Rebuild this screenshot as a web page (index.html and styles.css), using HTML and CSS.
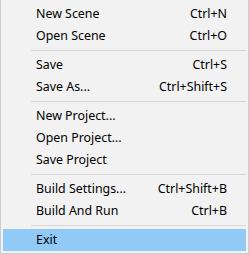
FILE: index.html
```html
<!DOCTYPE html>
<html lang="en">
<head>
  <meta charset="utf-8">
  <title>File menu</title>
  <link rel="stylesheet" href="styles.css">
</head>
<body>
  <ul class="menu">
    <li class="menu__item"><span class="menu__label">New Scene</span><span class="menu__key">Ctrl+N</span></li>
    <li class="menu__item"><span class="menu__label">Open Scene</span><span class="menu__key">Ctrl+O</span></li>
    <li class="menu__sep"></li>
    <li class="menu__item"><span class="menu__label">Save</span><span class="menu__key">Ctrl+S</span></li>
    <li class="menu__item"><span class="menu__label">Save As...</span><span class="menu__key">Ctrl+Shift+S</span></li>
    <li class="menu__sep"></li>
    <li class="menu__item"><span class="menu__label">New Project...</span></li>
    <li class="menu__item"><span class="menu__label">Open Project...</span></li>
    <li class="menu__item"><span class="menu__label">Save Project</span></li>
    <li class="menu__sep"></li>
    <li class="menu__item"><span class="menu__label">Build Settings...</span><span class="menu__key">Ctrl+Shift+B</span></li>
    <li class="menu__item"><span class="menu__label">Build And Run</span><span class="menu__key">Ctrl+B</span></li>
    <li class="menu__sep"></li>
    <li class="menu__item menu__item--active"><span class="menu__label">Exit</span></li>
  </ul>
</body>
</html>
```

FILE: styles.css
```css
*, *::before, *::after {
  margin: 0;
  padding: 0;
  box-sizing: border-box;
}

html {
  background: #ffffff;
}

body {
  margin: 0;
  font-family: "Noto Sans", sans-serif;
  font-size: 12.4px;
  color: #000000;
}

ul, li {
  list-style: none;
}

.menu {
  width: 249px;
  height: 254px;
  padding: 3px 2px 2px;
  background: #f2f2f2;
  border: 1px solid #cccccc;
  border-top: none;
}

.menu__item {
  display: flex;
  align-items: center;
  justify-content: space-between;
  height: 22px;
  padding: 0 19px 0 33px;
  line-height: 22px;
  white-space: nowrap;
}

.menu__item--active {
  background: #91c9f7;
}

.menu__sep {
  height: 1px;
  margin: 3px 0 3px 28px;
  background: #d7d7d7;
}
```
